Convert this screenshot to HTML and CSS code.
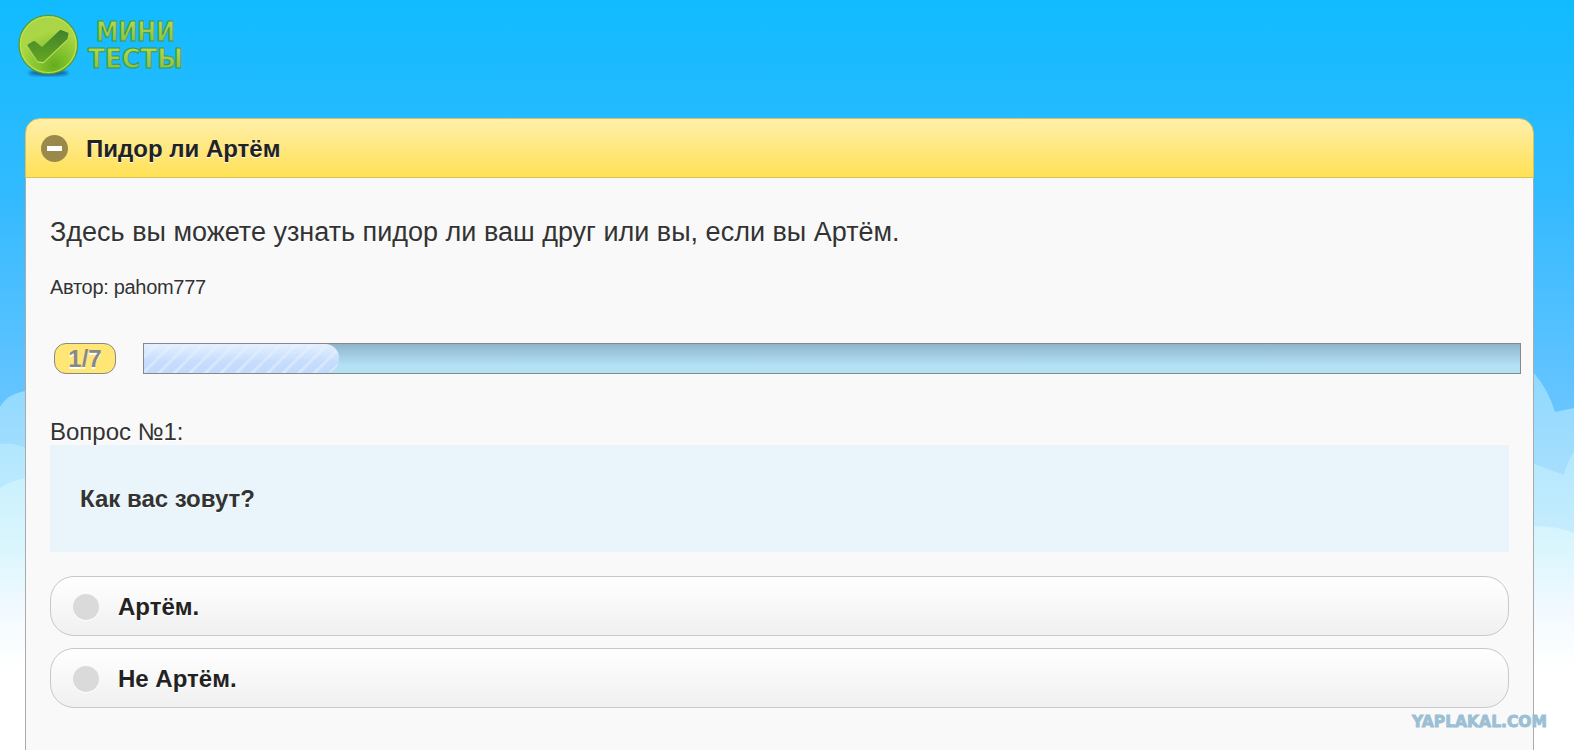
FILE: index.html
```
<!DOCTYPE html>
<html lang="ru">
<head>
  <meta charset="UTF-8" />
  <title>Мини тесты</title>
  <link rel="stylesheet" href="styles.css">
</head>
<body>
  <svg class="sky" viewBox="0 0 1574 750" preserveAspectRatio="none">
    <defs>
      <linearGradient id="air" gradientUnits="userSpaceOnUse" x1="0" y1="0" x2="0" y2="420">
        <stop offset="0" stop-color="#11bbff"/>
        <stop offset="0.45" stop-color="#31baff"/>
        <stop offset="1" stop-color="#6ac5ff"/>
      </linearGradient>
      <linearGradient id="cloud1" gradientUnits="userSpaceOnUse" x1="0" y1="370" x2="0" y2="480">
        <stop offset="0" stop-color="#8edaff"/>
        <stop offset="1" stop-color="#a8defd"/>
      </linearGradient>
      <linearGradient id="cloud2" gradientUnits="userSpaceOnUse" x1="0" y1="440" x2="0" y2="530">
        <stop offset="0" stop-color="#b0e7ff"/>
        <stop offset="1" stop-color="#c5ecfd"/>
      </linearGradient>
      <linearGradient id="cloud3" gradientUnits="userSpaceOnUse" x1="0" y1="476" x2="0" y2="670">
        <stop offset="0" stop-color="#c9f1fe"/>
        <stop offset="0.4" stop-color="#dcf6fe"/>
        <stop offset="0.7" stop-color="#f3faff"/>
        <stop offset="1" stop-color="#ffffff"/>
      </linearGradient>
    </defs>
    <rect width="1574" height="750" fill="url(#air)"/>
    <path fill="url(#cloud1)" d="M0 407C6 397 14 393 26 391H1534V373Q1548 389 1555 412L1574 408V750H0Z"/>
    <path fill="url(#cloud2)" d="M0 444Q12 442 26 448H1534V464L1564 475Q1567 462 1574 452V750H0Z"/>
    <path fill="url(#cloud3)" d="M0 488Q12 480 26 478L1534 526Q1558 526 1574 533V750H0Z"/>
  </svg>

  <div class="page">
    <div class="logo">
      <svg width="190" height="90" viewBox="0 0 190 90">
        <defs>
          <radialGradient id="ball" cx="0.6" cy="0.85" r="0.9">
            <stop offset="0" stop-color="#62ad1e"/>
            <stop offset="0.3" stop-color="#84c32f"/>
            <stop offset="0.65" stop-color="#abd645"/>
            <stop offset="1" stop-color="#a9d447"/>
          </radialGradient>
          <linearGradient id="tick" x1="0" y1="0" x2="0" y2="1">
            <stop offset="0" stop-color="#43842a"/>
            <stop offset="1" stop-color="#63a523"/>
          </linearGradient>
          <linearGradient id="letters" x1="0" y1="0" x2="0" y2="1">
            <stop offset="0.2" stop-color="#b3d84c"/>
            <stop offset="0.9" stop-color="#86c047"/>
          </linearGradient>
          <filter id="soft"><feGaussianBlur stdDeviation="1.5"/></filter>
        </defs>
        <ellipse cx="48.500" cy="73" rx="20" ry="3" fill="#14669a" filter="url(#soft)"/>
        <circle cx="48.300" cy="44.700" r="29.300" fill="url(#ball)" stroke="#4f9d32" stroke-width="1.200"/>
        <circle cx="48.300" cy="44.700" r="27.800" fill="none" stroke="#bfe04f" stroke-width="1.200"/>
        <g stroke-width="3" stroke-linejoin="round">
          <path d="M29 45.500L34 42.500L42 49L60.500 31.500L67 34L66 38.500L43 60.500L38.500 60Z" transform="translate(0,1.200)" fill="#c3e36a" stroke="#c3e36a"/>
          <path d="M29 45.500L34 42.500L42 49L60.500 31.500L67 34L66 38.500L43 60.500L38.500 60Z" fill="url(#tick)" stroke="url(#tick)"/>
        </g>
        <g class="logo-text">
          <text x="96" y="40.500" textLength="79" lengthAdjust="spacingAndGlyphs">МИНИ</text>
          <text x="88" y="67.500" textLength="95" lengthAdjust="spacingAndGlyphs">ТЕСТЫ</text>
        </g>
      </svg>
    </div>

    <div class="panel">
      <div class="panel-header">
        <span class="minus"></span>
        <h1>Пидор ли Артём</h1>
      </div>
      <div class="panel-body">
        <p class="about">Здесь вы можете узнать пидор ли ваш друг или вы, если вы Артём.</p>
        <p class="author">Автор: pahom777</p>
        <div class="progress">
          <span class="counter">1/7</span>
          <div class="bar">
            <div class="bar-fill" style="width: 14.2%"></div>
          </div>
        </div>
        <div class="question-label">Вопрос №1:</div>
        <div class="question">Как вас зовут?</div>
        <div class="answers">
          <div class="answer"><span class="radio"></span>Артём.</div>
          <div class="answer"><span class="radio"></span>Не Артём.</div>
        </div>
      </div>
    </div>
  </div>

  <svg class="watermark" width="150" height="24" viewBox="0 0 150 24">
    <text x="2" y="16.500" textLength="135" lengthAdjust="spacingAndGlyphs">YAPLAKAL.COM</text>
  </svg>
</body>
</html>
```

FILE: styles.css
```
* {
  box-sizing: border-box;
}

body {
  margin: 0;
  height: 750px;
  overflow: hidden;
  position: relative;
  font-family: "Liberation Sans", Arial, sans-serif;
  color: #333;
  background: #fff;
}

.sky {
  position: absolute;
  top: 0;
  left: 0;
  width: 100%;
  height: 750px;
}

.page {
  position: relative;
  height: 750px;
  display: flex;
  flex-direction: column;
}

.logo {
  height: 118px;
}

.logo svg {
  display: block;
}

.logo-text {
  font-family: "DejaVu Sans", sans-serif;
  font-size: 27px;
  fill: url(#letters);
  stroke: #3b9a4e;
  stroke-width: 1.1px;
  stroke-linejoin: round;
  font-weight: bold;
}

.panel {
  flex: 1;
  display: flex;
  flex-direction: column;
  margin: 0 40px 0 25px;
}

.panel-header {
  display: flex;
  align-items: center;
  gap: 18px;
  height: 60px;
  padding-left: 15px;
  border: 1px solid #dcc05a;
  border-radius: 15px 15px 0 0;
  background: linear-gradient(#ffefaa, #ffe155);
}

.panel-header h1 {
  margin: 0;
  padding-top: 2px;
  font-size: 24px;
  color: #222;
  text-shadow: 0 1px 0 #fff;
}

.minus {
  display: flex;
  align-items: center;
  justify-content: center;
  width: 27px;
  height: 27px;
  border-radius: 50%;
  background: #998a4c;
}

.minus::before {
  content: "";
  width: 15px;
  height: 5px;
  background: #fff;
}

.panel-body {
  flex: 1;
  padding: 0 24px;
  border: 1px solid #aaa;
  border-width: 0 1px;
  background: #f9f9f9;
  text-shadow: 0 1px 0 #fff;
}

.about {
  margin: 38px 0 0;
  font-size: 27px;
  line-height: 32px;
}

.author {
  margin: 27px 0 0;
  font-size: 20px;
  line-height: 24px;
  letter-spacing: -0.3px;
}

.progress {
  display: flex;
  gap: 27px;
  margin: 44px -12px 0 4px;
}

.counter {
  width: 62px;
  height: 31px;
  border: 1px solid #888;
  border-radius: 12px;
  background: #ffe675;
  color: #888;
  font-size: 24px;
  font-weight: bold;
  line-height: 29px;
  text-align: center;
  text-shadow: 0 2px 0 #fff;
}

.bar {
  flex: 1;
  height: 31px;
  border: 1px solid #888;
  background: linear-gradient(#8fb4ca, #aad6ec 55%, #b5e1f6 75%, #b5e1f3);
}

.bar-fill {
  height: 100%;
  border-radius: 0 14px 14px 0;
  background:
    linear-gradient(rgba(232, 243, 255, 0.9), rgba(210, 228, 253, 0.3) 60%, rgba(200, 220, 252, 0)),
    repeating-linear-gradient(135deg, #c1dafc 0 7px, #d8e7fd 8px 10px, #c1dafc 11px);
}

.question-label {
  margin-top: 44px;
  font-size: 24px;
  line-height: 27px;
}

.question {
  height: 107px;
  padding-left: 30px;
  background: #e9f5fa;
  font-size: 24px;
  font-weight: bold;
  line-height: 107px;
}

.answers {
  display: flex;
  flex-direction: column;
  gap: 12px;
  margin-top: 24px;
}

.answer {
  display: flex;
  align-items: center;
  gap: 19px;
  height: 60px;
  padding: 2px 0 0 22px;
  border: 1px solid #c8c8c8;
  border-radius: 24px;
  background: linear-gradient(#fff, #f0f0f0);
  color: #222;
  font-size: 24px;
  font-weight: bold;
}

.radio {
  width: 26px;
  height: 26px;
  border-radius: 50%;
  background: #dadada;
  box-shadow: 0 1px 0 #fff;
}

.watermark {
  position: absolute;
  top: 710px;
  left: 1410px;
}

.watermark text {
  font-family: "DejaVu Sans", sans-serif;
  font-size: 15.5px;
  font-weight: bold;
  fill: #9bbfd4;
  stroke: #9bbfd4;
  stroke-width: 0.9px;
}
```
